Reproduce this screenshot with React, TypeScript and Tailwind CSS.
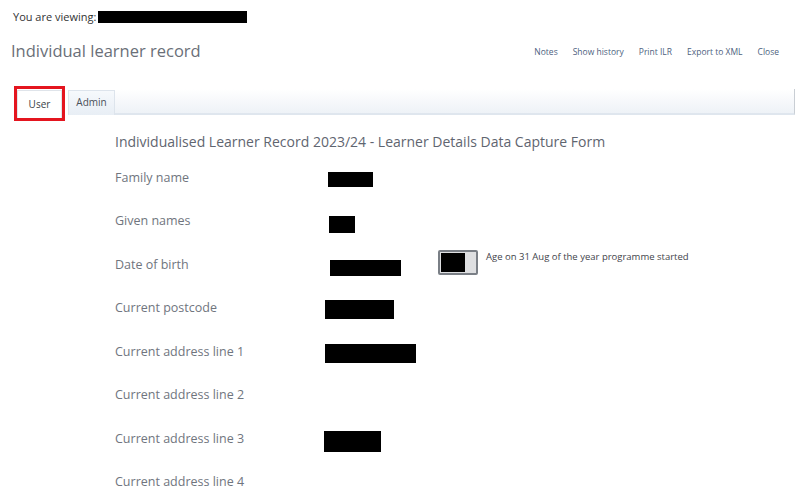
import React from "react";

const rows: { label: string; bar?: { ml: number; w: number; h: number; dy: number } }[] = [
  { label: "Family name", bar: { ml: 328, w: 45, h: 15, dy: 3 } },
  { label: "Given names", bar: { ml: 329, w: 26, h: 17, dy: 4 } },
  { label: "Date of birth", bar: { ml: 330, w: 71, h: 16, dy: 4 } },
  { label: "Current postcode", bar: { ml: 325, w: 69, h: 19, dy: 1 } },
  { label: "Current address line 1", bar: { ml: 325, w: 91, h: 19, dy: 1 } },
  { label: "Current address line 2" },
  { label: "Current address line 3", bar: { ml: 324, w: 57, h: 21, dy: 1 } },
  { label: "Current address line 4" },
];

export default function App() {
  return (
    <div
      className="w-[800px] h-[497px] overflow-hidden bg-white relative"
      style={{ fontFamily: '"Open Sans", "DejaVu Sans", sans-serif' }}
    >
      <div className="flex items-center pl-[13px] pt-[9px] text-[11px] text-[#333]">
        <span>You are viewing:</span>
        <span className="ml-[2px] inline-block w-[149px] h-[12px] bg-black" />
      </div>

      <div className="flex items-center justify-between pl-[11px] pr-[21px] mt-[13px]">
        <h1 className="text-[16.5px] text-[#6a6f78] leading-[24px]">Individual learner record</h1>
        <nav className="flex gap-[15px] text-[8.5px] text-[#4e5f80] pt-[3px]">
          <span>Notes</span>
          <span>Show history</span>
          <span>Print ILR</span>
          <span>Export to XML</span>
          <span>Close</span>
        </nav>
      </div>

      <div className="flex items-end mt-[23px] ml-[14px] mr-[5px] h-[35px]">
        <div className="border-[3px] border-[#e4151f] h-[35px] w-[51px] flex">
          <div className="flex-1 bg-white border border-b-0 border-[#dfe4ea] flex items-center justify-center text-[10px] text-[#3a3f48] mt-[1px]">
            User
          </div>
        </div>
        <div className="ml-[3px] mb-[6px] w-[47px] h-[25px] bg-gradient-to-b from-[#f6f9fc] to-[#e8eef5] border border-b-0 border-[#dde4ec] flex items-center justify-center text-[10px] text-[#4a5058]">
          Admin
        </div>
        <div className="flex-1 mb-[6px] h-[26px] border-r border-[#c9ced4] bg-gradient-to-b from-white to-[#eef2f7] border-b-[2px] border-b-[#dfe6ee]" />
      </div>

      <div className="pl-[115px] mt-[11px]">
        <div className="text-[14px] text-[#5f6570] leading-[20px]">
          Individualised Learner Record 2023/24 - Learner Details Data Capture Form
        </div>
        <div className="mt-[17px] flex flex-col">
          {rows.map((r, i) => (
            <div key={r.label} className="relative h-[43.5px] flex items-start text-[12.5px] text-[#70757e]">
              <span className="leading-[18px]">{r.label}</span>
              {r.bar && (
                <span
                  className="absolute bg-black"
                  style={{ left: r.bar.ml - 115, top: r.bar.dy, width: r.bar.w, height: r.bar.h }}
                />
              )}
              {i === 2 && (
                <div className="absolute left-[323px] top-[-6px] flex items-start">
                  <div className="w-[40px] h-[25px] rounded-[2px] border-2 border-[#7a7f86] bg-[#dedfe1] flex p-[1px]">
                    <div className="w-[24px] h-full bg-black" />
                  </div>
                  <span className="ml-[8px] text-[9.5px] text-[#3f444b] leading-[14px]">
                    Age on 31 Aug of the year programme started
                  </span>
                </div>
              )}
            </div>
          ))}
        </div>
      </div>
    </div>
  );
}
